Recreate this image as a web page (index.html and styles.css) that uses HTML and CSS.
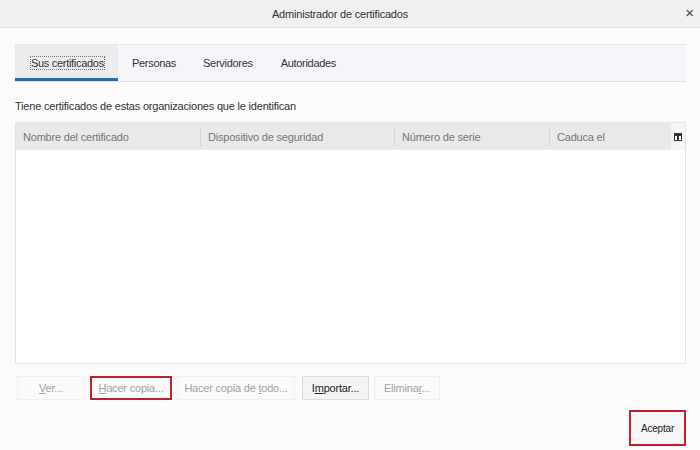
FILE: index.html
```html
<!DOCTYPE html>
<html lang="es">

<head>
  <meta charset="UTF-8" />
  <title>Administrador de certificados</title>
  <link rel="stylesheet" href="styles.css">
</head>

<body>
  <div class="title-bar">
    <span class="title">Administrador de certificados</span>
    <span class="close">×</span>
  </div>

  <div class="dialog">
    <ul class="tabs">
      <li class="tab active"><span class="focus">Sus certificados</span></li>
      <li class="tab">Personas</li>
      <li class="tab">Servidores</li>
      <li class="tab">Autoridades</li>
    </ul>

    <p class="info">Tiene certificados de estas organizaciones que le identifican</p>

    <div class="cert-table">
      <div class="cert-head">
        <div class="col col-name">Nombre del certificado</div>
        <div class="col col-device">Dispositivo de seguridad</div>
        <div class="col col-serial">Número de serie</div>
        <div class="col col-expires">Caduca el</div>
        <div class="col-picker">
          <svg width="8" height="8" viewBox="0 0 8 8">
            <rect x="0.5" y="0.5" width="7" height="7" fill="#fff" stroke="#333" />
            <rect x="1" y="1" width="6" height="2" fill="#333" />
            <rect x="3" y="3" width="2" height="4" fill="#333" />
          </svg>
        </div>
      </div>
      <div class="cert-body">
        <!-- no certificates -->
      </div>
    </div>

    <div class="actions">
      <button class="btn disabled btn-ver"><u>V</u>er...</button>
      <button class="btn disabled marked btn-copy"><u>H</u>acer copia...</button>
      <button class="btn disabled btn-copy-all">Hacer copia de <u>t</u>odo...</button>
      <button class="btn btn-import">I<u>m</u>portar...</button>
      <button class="btn disabled btn-delete">Elimina<u>r</u>...</button>
    </div>

    <div class="footer">
      <button class="btn ok marked">Aceptar</button>
    </div>
  </div>
</body>

</html>
```

FILE: styles.css
```css
* {
  margin: 0;
  padding: 0;
  box-sizing: border-box;
}

body {
  font-family: 'Liberation Sans', Arial, sans-serif;
  font-size: 11px;
  background-color: #fbfbfb;
  color: #222;
  width: 700px;
  height: 450px;
  overflow: hidden;
}

.title-bar {
  height: 28px;
  background-color: #f0f0f0;
  border-bottom: 1px solid #e2e2e2;
  display: flex;
  align-items: center;
  justify-content: center;
  padding-right: 20px;
  position: relative;
}

.title {
  font-size: 11px;
  color: #333;
  letter-spacing: -0.2px;
}

.close {
  position: absolute;
  right: 6px;
  top: 4px;
  font-size: 15px;
  color: #444;
}

.dialog {
  padding: 16px 14px 0 15px;
}

.tabs {
  list-style: none;
  display: flex;
  height: 38px;
  background-color: #f6f6fa;
  border-top: 1px solid #e6e6ea;
  border-bottom: 1px solid #e2e2e6;
}

.tab {
  display: flex;
  align-items: center;
  white-space: nowrap;
  color: #333;
  letter-spacing: -0.3px;
}

.tab.active {
  background-color: #ececec;
  padding: 3px 0 0 16px;
  border-bottom: 3px solid #1f6fb5;
  width: 103px;
}

.tab:nth-child(2) {
  padding-left: 14px;
}

.tab:nth-child(3) {
  padding-left: 27px;
}

.tab:nth-child(4) {
  padding-left: 28px;
}

.focus {
  outline: 1px dotted #777;
  outline-offset: 0;
}

.info {
  margin: 18px 0 10px 0;
  color: #333;
  letter-spacing: -0.2px;
}

.cert-table {
  border: 1px solid #e4e4e4;
  background-color: #ffffff;
}

.cert-head {
  display: flex;
  align-items: center;
  height: 27px;
  background-color: #e9e9e9;
}

.col {
  color: #777;
  padding-left: 7px;
  white-space: nowrap;
  letter-spacing: -0.2px;
  border-left: 1px solid #d4d4d4;
  line-height: 18px;
}

.col-name {
  width: 184px;
  border-left: none;
}

.col-device {
  width: 194px;
}

.col-serial {
  width: 155px;
}

.col-expires {
  flex: 1;
}

.col-picker {
  width: 14px;
  display: flex;
  align-items: center;
  justify-content: center;
  background-color: #f5f5f5;
  height: 100%;
}

.cert-body {
  height: 213px;
}

.actions {
  display: flex;
  gap: 5px;
  margin-top: 12px;
  padding-left: 2px;
}

.btn {
  font-family: inherit;
  font-size: 11px;
  letter-spacing: -0.2px;
  white-space: nowrap;
  height: 24px;
  background-color: #f9f9f9;
  border: 1px solid #efefef;
  color: #222;
  padding: 0 6px;
}

.btn.disabled {
  color: #a2a2a2;
  background-color: #fafafa;
}

.btn-import {
  border-color: #dcdcdc;
  background-color: #f4f4f4;
  margin-left: 2px;
}

.btn-ver {
  width: 68px;
}

.btn-copy {
  width: 82px;
}

.btn-copy-all {
  width: 118px;
}

.btn-import {
  width: 67px;
}

.btn-delete {
  width: 66px;
}

.btn.marked {
  border: 2px solid #c0202c;
}

.footer {
  display: flex;
  justify-content: flex-end;
  margin-top: 10px;
}

.btn.ok {
  width: 57px;
  height: 36px;
  font-size: 10px;
  background-color: #f7f7f7;
}
```
